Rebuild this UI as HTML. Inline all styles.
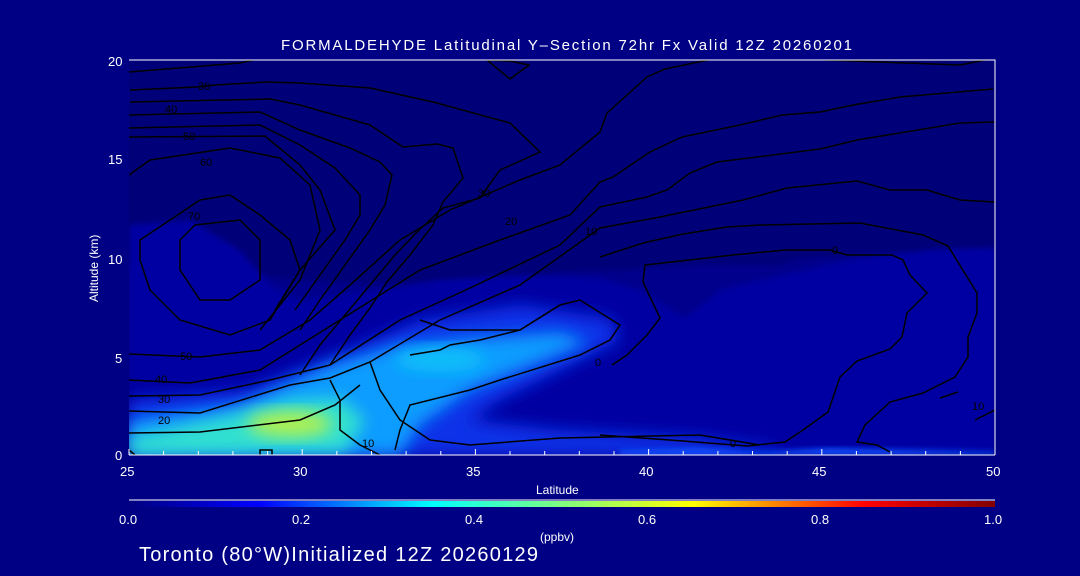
<!DOCTYPE html>
<html><head><style>
html,body{margin:0;padding:0;background:#000084;width:1080px;height:576px;overflow:hidden}
svg{position:absolute;left:0;top:0}
text{font-family:"Liberation Sans",sans-serif;fill:#fff}
.k text{fill:#000}
</style></head><body>
<svg width="1080" height="576" viewBox="0 0 1080 576">
<defs>
<filter id="b" x="-30%" y="-30%" width="160%" height="160%"><feGaussianBlur stdDeviation="8"/></filter>
<filter id="b2" x="-30%" y="-30%" width="160%" height="160%"><feGaussianBlur stdDeviation="3"/></filter>
<clipPath id="c"><rect x="129" y="60" width="866" height="395"/></clipPath>
<linearGradient id="cb" x1="0" x2="1">
<stop offset="0" stop-color="#00007f"/><stop offset="0.15" stop-color="#0000ff"/>
<stop offset="0.35" stop-color="#00ffff"/><stop offset="0.5" stop-color="#7fff7f"/>
<stop offset="0.65" stop-color="#ffff00"/><stop offset="0.85" stop-color="#ff0000"/>
<stop offset="1" stop-color="#7f0000"/></linearGradient>
</defs>
<g clip-path="url(#c)">
<rect x="129" y="60" width="866" height="395" fill="#000078"/>
<path d="M129,265 L200,262 L290,280 L400,285 L520,280 L560,272 L620,270 L690,265 L780,265 L800,258 L995,250 L995,455 L129,455Z" fill="#00008c" filter="url(#b2)"/>
<path d="M129,225 L190,220 L240,250 L270,285 L300,300 L380,290 L440,280 L520,275 L600,278 L640,290 L685,318 L720,290 L760,280 L850,260 L930,250 L995,248 L995,455 L129,455Z" fill="#0000a2" filter="url(#b2)"/>
<path d="M129,400 L250,390 L350,350 L420,320 L520,305 L610,318 L620,340 L560,370 L500,400 L470,420 L560,430 L700,438 L780,450 L780,455 L129,455Z" fill="#0a30e8" filter="url(#b)"/>
<path d="M129,420 L240,405 L330,365 L400,345 L470,338 L560,332 L590,342 L520,370 L470,390 L420,425 L400,455 L129,455Z" fill="#0a9cff" filter="url(#b)"/>
<path d="M129,438 L220,418 L290,400 L340,398 L365,420 L345,452 L129,455Z" fill="#30e0d0" filter="url(#b)"/>
<ellipse cx="290" cy="424" rx="42" ry="13" fill="#b0f050" filter="url(#b)"/>
<ellipse cx="440" cy="360" rx="45" ry="12" fill="#10c0f8" filter="url(#b)"/>
<path d="M620,450 L700,448 L760,452 L830,448 L995,452 L995,455 L620,455Z" fill="#1050ff" filter="url(#b2)"/>
</g>
<g fill="none" stroke="#000" stroke-width="1.5" clip-path="url(#c)">
<path d="M129,72 L240,63 L262,58"/>
<path d="M130,90 L197,87 L215,85 L267,82 L300,83 L370,88 L433,102 L510,123 L540,152 L500,170 L487,188 L480,198 L443,208 L417,232 L395,255 L370,285 L345,315 L320,345 L300,375"/>
<path d="M487,60 L510,61 L529,65 L510,79Z"/>
<path d="M130,102 L270,99 L300,105 L370,125 L403,147 L437,144 L453,148 L463,178 L443,202 L433,225 L410,255 L387,282 L370,308 L350,335 L330,365"/>
<path d="M129,115 L260,112 L300,130 L350,148 L380,162 L392,175 L385,205 L370,230 L345,265 L320,300 L300,330"/>
<path d="M129,128 L260,125 L300,145 L335,168 L360,195 L360,215 L345,240 L320,275 L295,310"/>
<path d="M129,137 L265,136 L300,165 L320,190 L335,230 L300,270 L275,310"/>
<path d="M129,175 L150,160 L230,148 L280,158 L310,185 L320,230 L300,280 L260,330"/>
<path d="M140,240 L200,200 L230,195 L260,215 L290,240 L300,270 L270,320 L230,335 L180,320 L150,290 L140,260Z"/>
<path d="M180,240 L195,225 L240,220 L260,240 L260,280 L230,300 L200,300 L180,270Z"/>
<path d="M129,354 L200,357 L260,350 L310,320 L350,285 L400,240 L450,210 L520,180 L560,165 L600,132 L607,113 L647,77 L665,69 L713,59 L800,59 L960,65 L995,58"/>
<path d="M129,380 L190,383 L260,370 L300,345 L340,320 L420,270 L500,240 L570,215 L600,182 L613,177 L650,152 L682,137 L740,125 L782,115 L820,112 L853,105 L900,97 L993,89"/>
<path d="M129,396 L200,395 L270,380 L330,365 L400,320 L470,288 L560,245 L600,207 L647,197 L667,190 L690,173 L717,162 L820,149 L857,140 L960,123 L995,122"/>
<path d="M129,411 L200,413 L290,385 L330,378 L370,362 L440,320 L520,285 L600,228 L660,217 L743,200 L787,188 L857,181 L890,190 L927,190 L960,200 L995,202"/>
<path d="M129,433 L200,432 L300,420 L335,405 L360,385"/>
<path d="M370,362 L380,390 L400,420 L430,440 L470,445 L560,438 L700,435 L760,445"/>
<path d="M330,380 L340,400 L340,430 L360,445 L380,455"/>
<path d="M410,355 L440,350 L450,345 L480,340 L520,330 L560,305 L580,300 L620,325 L610,340 L580,355 L500,380 L470,390 L410,405 L400,430 L395,450"/>
<path d="M420,320 L450,330 L520,330 L560,305"/>
<path d="M600,257 L643,243 L683,234 L727,227 L760,225 L860,223 L923,235 L948,246 L977,293 L977,313 L968,337 L968,357 L955,377 L923,393 L890,402 L865,425 L857,442 L877,445 L890,452"/>
<path d="M612,365 L627,355 L647,335 L660,318 L643,282 L645,265 L733,255 L785,250 L830,250 L847,255 L892,255 L903,260 L910,275 L927,293 L907,313 L902,337 L890,349 L857,361 L840,377 L828,412 L803,430 L785,442 L747,446 L683,441 L600,435"/>
<path d="M975,420 L995,410 M958,392 L940,398"/>
<path d="M129,450 L135,455 M260,455 L260,450 L272,450 L272,455"/>
</g>
<g class="k" font-size="11"><text x="198" y="90">30</text><text x="165" y="113">40</text><text x="183" y="140">50</text><text x="200" y="166">60</text><text x="188" y="220">70</text><text x="180" y="360">50</text><text x="155" y="383">40</text><text x="158" y="403">30</text><text x="158" y="424">20</text><text x="362" y="447">10</text><text x="595" y="366">0</text><text x="730" y="447">0</text><text x="505" y="225">20</text><text x="585" y="235">10</text><text x="478" y="197">30</text><text x="832" y="254">0</text><text x="972" y="410">10</text></g>
<g stroke="#fff" stroke-width="1" fill="none">
<path d="M129,60 H995 V455 M129,455 H995"/>
<path d="M129,455 v-6 M163.6,455v-4 M198.3,455v-4 M232.9,455v-4 M267.6,455v-4 M302.2,455v-6 M336.8,455v-4 M371.5,455v-4 M406.1,455v-4 M440.8,455v-4 M475.4,455v-6 M510,455v-4 M544.7,455v-4 M579.3,455v-4 M614,455v-4 M648.6,455v-6 M683.2,455v-4 M717.9,455v-4 M752.5,455v-4 M787.2,455v-4 M821.8,455v-6 M856.4,455v-4 M891.1,455v-4 M925.7,455v-4 M960.4,455v-4 M995,455v-6"/>
<path d="M129,500 H995"/>
</g>
<rect x="129" y="501" width="866" height="6" fill="url(#cb)"/>
<g font-size="13">
<text x="281" y="50" font-size="15" textLength="571" lengthAdjust="spacing">FORMALDEHYDE Latitudinal Y–Section 72hr  Fx Valid 12Z 20260201</text>
<text x="108" y="66">20</text><text x="108" y="164">15</text><text x="108" y="264">10</text><text x="115" y="363">5</text><text x="115" y="460">0</text>
<text x="120" y="476">25</text><text x="293" y="476">30</text><text x="466" y="476">35</text><text x="639" y="476">40</text><text x="812" y="476">45</text><text x="986" y="476">50</text>
<text x="536" y="494" font-size="12">Latitude</text>
<text x="98" y="302" font-size="12" transform="rotate(-90 98 302)">Altitude (km)</text>
<text x="119" y="524">0.0</text><text x="292" y="524">0.2</text><text x="465" y="524">0.4</text><text x="638" y="524">0.6</text><text x="811" y="524">0.8</text><text x="984" y="524">1.0</text>
<text x="540" y="541" font-size="12">(ppbv)</text>
<text x="139" y="561" font-size="20" textLength="399" lengthAdjust="spacing">Toronto (80°W)Initialized 12Z 20260129</text>
</g>
</svg>
</body></html>
